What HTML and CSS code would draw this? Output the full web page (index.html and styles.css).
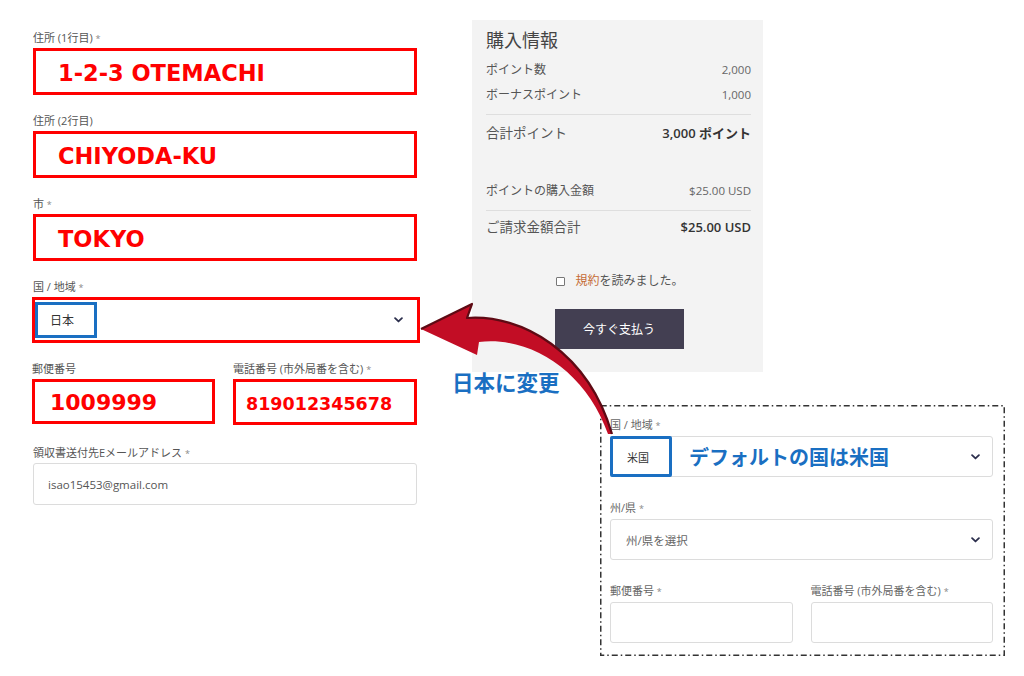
FILE: index.html
```html
<!DOCTYPE html>
<html lang="ja">
<head>
<meta charset="utf-8">
<title>購入情報</title>
<link rel="stylesheet" href="styles.css">
</head>
<body>
<div class="page">
  <div class="form-col">
    <div class="field">
      <label class="lbl">住所 (1行目) <span class="req">*</span></label>
      <div class="red-box big pad22">1-2-3 OTEMACHI</div>
    </div>
    <div class="field">
      <label class="lbl">住所 (2行目)</label>
      <div class="red-box big pad22">CHIYODA-KU</div>
    </div>
    <div class="field">
      <label class="lbl">市 <span class="req">*</span></label>
      <div class="red-box big pad22">TOKYO</div>
    </div>
    <div class="field">
      <label class="lbl">国 / 地域 <span class="req">*</span></label>
      <div class="red-box country">
        <span class="blue-box jp">日本</span>
        <svg class="chev" viewBox="0 0 10 6"><polyline points="1.2,1 5,4.6 8.8,1"/></svg>
      </div>
    </div>
    <div class="field-row">
      <div class="field half">
        <label class="lbl">郵便番号</label>
        <div class="red-box big zip">1009999</div>
      </div>
      <div class="field half">
        <label class="lbl">電話番号 (市外局番を含む) <span class="req">*</span></label>
        <div class="red-box phone">819012345678</div>
      </div>
    </div>
    <div class="field email-field">
      <label class="lbl">領収書送付先Eメールアドレス <span class="req">*</span></label>
      <div class="input email">isao15453@gmail.com</div>
    </div>
  </div>

  <div class="right-col">
    <div class="summary">
      <h2 class="sum-title">購入情報</h2>
      <div class="row r1"><span>ポイント数</span><span class="num">2,000</span></div>
      <div class="row r2"><span>ボーナスポイント</span><span class="num">1,000</span></div>
      <div class="divider"></div>
      <div class="row total"><span>合計ポイント</span><span class="strong">3,000 ポイント</span></div>
      <div class="row price"><span>ポイントの購入金額</span><span class="num">$25.00 USD</span></div>
      <div class="divider d2"></div>
      <div class="row total t2"><span>ご請求金額合計</span><span class="strong">$25.00 USD</span></div>
      <div class="terms"><span class="cbox"></span><span><span class="link">規約</span>を読みました。</span></div>
      <div class="btn-wrap"><button class="pay">今すぐ支払う</button></div>
    </div>
    <div class="annot">日本に変更</div>
    <div class="callout">
      <svg class="dash" viewBox="0 0 405 251" preserveAspectRatio="none"><rect x="0.75" y="0.75" width="403.5" height="249.5"/></svg>
      <div class="cfield">
        <label class="clbl">国 / 地域 <span class="req">*</span></label>
        <div class="input sel">
          <span class="blue-box us">米国</span>
          <span class="note">デフォルトの国は米国</span>
          <svg class="chev" viewBox="0 0 10 6"><polyline points="1.2,1 5,4.6 8.8,1"/></svg>
        </div>
      </div>
      <div class="cfield">
        <label class="clbl">州/県 <span class="req">*</span></label>
        <div class="input sel state">
          <span class="ph">州/県を選択</span>
          <svg class="chev" viewBox="0 0 10 6"><polyline points="1.2,1 5,4.6 8.8,1"/></svg>
        </div>
      </div>
      <div class="crow">
        <div class="cfield chalf">
          <label class="clbl">郵便番号 <span class="req">*</span></label>
          <div class="input cin"></div>
        </div>
        <div class="cfield chalf">
          <label class="clbl">電話番号 (市外局番を含む) <span class="req">*</span></label>
          <div class="input cin"></div>
        </div>
      </div>
    </div>
  </div>
</div>
<svg class="arrow" viewBox="0 0 1024 676" width="1024" height="676">
  <path class="arrow-fill" d="M421 329 L472 304 L467 318 C522 314 588 352 612 434 L608 434 C586 372 532 336 479 342 L477 355 Z"/>
  <path class="arrow-edge" d="M421 329 L472 304 L467 318 C522 314 588 352 612 434"/>
</svg>
</body>
</html>
```

FILE: styles.css
```css
* { box-sizing: border-box; }
html, body { margin: 0; padding: 0; }
body {
  width: 1024px;
  height: 676px;
  background: #fff;
  position: relative;
  overflow: hidden;
  font-family: "Open Sans", "Noto Sans CJK JP", sans-serif;
  color: #444;
}
.page {
  display: flex;
  align-items: flex-start;
  padding-left: 33px;
}
.form-col {
  width: 384px;
  padding-top: 31px;
  display: flex;
  flex-direction: column;
}
.field { display: flex; flex-direction: column; margin-bottom: 19px; }
.lbl, .clbl {
  display: block;
  font-size: 11px;
  line-height: 14px;
  height: 14px;
  color: #555;
  margin-bottom: 3px;
  white-space: nowrap;
}
.req { color: #888; font-size: 9px; }
.red-box {
  border: 3px solid #ff0000;
  height: 47px;
  display: flex;
  align-items: center;
  background: #fff;
}
.big {
  font-family: "DejaVu Sans", "Noto Sans CJK JP", sans-serif;
  font-weight: bold;
  color: #ff0000;
  font-size: 22.5px;
}
.pad22 { padding-left: 22px; padding-top: 2px; }
.country {
  margin-left: -1px;
  width: 388px;
  height: 46px;
  padding: 2px 14px 2px 0;
  justify-content: space-between;
  align-items: stretch;
}
.blue-box {
  border: 3px solid #1a6fc2;
  display: flex;
  align-items: center;
  font-size: 12px;
  color: #333;
  background: #fff;
}
.jp { width: 62px; padding-left: 12px; }
.chev {
  width: 9px;
  height: 6px;
  align-self: center;
  fill: none;
  stroke: #2c2f4d;
  stroke-width: 2;
  stroke-linecap: round;
  stroke-linejoin: round;
}
.field-row { display: flex; gap: 18px; }
.half { flex: none; }
.half:first-child { margin-left: -1px; width: 183px; }
.half:last-child { width: 184px; }
.zip { height: 45px; font-size: 22px; padding-left: 15px; padding-top: 2px; }
.phone {
  height: 46px;
  font-family: "DejaVu Sans", "Noto Sans CJK JP", sans-serif;
  font-weight: bold;
  color: #ff0000;
  font-size: 17.5px;
  padding-left: 10px;
  padding-top: 4px;
}
.input {
  border: 1px solid #dcdcdc;
  border-radius: 3px;
  background: #fff;
}
.email-field { margin-top: 2px; }
.email {
  height: 42px;
  display: flex;
  align-items: center;
  padding-left: 14px;
  font-size: 11.5px;
  color: #555;
}

/* right column */
.right-col {
  margin-left: 36px;
  width: 552px;
  display: flex;
  flex-direction: column;
}
.summary {
  margin-left: 19px;
  margin-top: 20px;
  width: 291px;
  height: 352px;
  background: #f3f3f3;
  padding: 0 12px 0 14px;
  display: flex;
  flex-direction: column;
}
.sum-title {
  margin: 0;
  font-weight: normal;
  font-size: 18px;
  line-height: 24px;
  margin-top: 8px;
  color: #444;
}
.row {
  display: flex;
  justify-content: space-between;
  align-items: center;
  font-size: 12px;
  line-height: 16px;
  height: 16px;
  color: #555;
}
.r1 { margin-top: 10px; }
.r2 { margin-top: 9px; }
.row .num { color: #666; font-size: 11.5px; }
.divider { height: 1px; background: #dedede; margin-top: 11px; }
.total { font-size: 13.5px; margin-top: 10px; }
.t2 { margin-top: 8px; }
.strong { font-weight: 600; color: #333; font-size: 13px; }
.price { margin-top: 42px; }
.d2 { margin-top: 11px; }
.terms {
  margin-top: 38px;
  display: flex;
  align-items: center;
  justify-content: center;
  gap: 10px;
  font-size: 12px;
  line-height: 16px;
  height: 16px;
  color: #555;
  padding-left: 3px;
}
.cbox {
  width: 9px;
  height: 9px;
  border: 1px solid #777;
  border-radius: 1px;
  background: #fff;
}
.link { color: #c56b33; }
.btn-wrap { display: flex; justify-content: center; margin-top: 20px; padding-left: 1px; }
.pay {
  width: 129px;
  height: 40px;
  border: none;
  background: #433f52;
  color: #fff;
  font-family: "Open Sans", "Noto Sans CJK JP", sans-serif;
  font-size: 12px;
}
.annot {
  margin-top: -2px;
  margin-left: -1px;
  font-family: "Noto Sans CJK JP", sans-serif;
  font-weight: bold;
  font-size: 21.5px;
  line-height: 24px;
  height: 24px;
  color: #1a6fc2;
  white-space: nowrap;
}
.callout {
  position: relative;
  margin-top: 11px;
  margin-left: 147px;
  width: 405px;
  height: 251px;
  padding: 12px 12px 0 10px;
}
.dash {
  position: absolute;
  left: 0; top: 0;
  width: 100%; height: 100%;
  fill: none;
  stroke: #333;
  stroke-width: 1.5;
  stroke-dasharray: 6 3 1.5 3;
}
.cfield { display: flex; flex-direction: column; margin-bottom: 23px; }
.clbl { line-height: 15px; height: 15px; margin-bottom: 4px; color: #666; }
.sel {
  height: 41px;
  display: flex;
  align-items: stretch;
  padding-right: 12px;
}
.us {
  width: 62px;
  margin: -1px 0 -1px -1px;
  padding-left: 14px;
  font-size: 11px;
  border-radius: 2px;
}
.note {
  flex: 1;
  display: flex;
  align-items: center;
  padding-left: 17px;
  font-family: "Noto Sans CJK JP", sans-serif;
  font-weight: bold;
  font-size: 20px;
  color: #1a6fc2;
}
.state { justify-content: space-between; padding-left: 15px; }
.ph { display: flex; align-items: center; font-size: 11.5px; color: #666; }
.crow { display: flex; gap: 18px; }
.chalf { width: 183px; margin-bottom: 0; }
.cin { height: 41px; }

.arrow {
  position: absolute;
  left: 0; top: 0;
  pointer-events: none;
}
.arrow-fill { fill: #c20d25; }
.arrow-edge { fill: none; stroke: #5e0a14; stroke-width: 2.2; stroke-linejoin: round; }
```
